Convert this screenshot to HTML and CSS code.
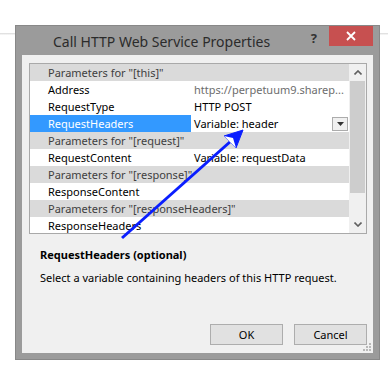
FILE: index.html
```html
<!DOCTYPE html>
<html lang="en">
<head>
    <meta charset="UTF-8">
    <title>Call HTTP Web Service Properties</title>
    <link rel="stylesheet" href="styles.css">
</head>
<body>
    <div class="dialog">
        <div class="titlebar">
            <span class="title">Call HTTP Web Service Properties</span>
            <span class="help">?</span>
            <span class="close"><svg width="10" height="10" viewBox="0 0 10 10"><path d="M1 1L9 9M9 1L1 9" stroke="#ffffff" stroke-width="1.8"/></svg></span>
        </div>
        <div class="client">
            <div class="grid">
                <div class="rows">
                    <div class="row category">Parameters for "[this]"</div>
                    <div class="row"><span class="name">Address</span><span class="value muted">https://perpetuum9.sharep...</span></div>
                    <div class="row"><span class="name">RequestType</span><span class="value">HTTP POST</span></div>
                    <div class="row selected"><span class="name">RequestHeaders</span><span class="value">Variable: header<span class="drop"><svg width="7" height="4" viewBox="0 0 7 4"><path d="M0 0H7L3.5 4Z" fill="#333"/></svg></span></span></div>
                    <div class="row category">Parameters for "[request]"</div>
                    <div class="row"><span class="name">RequestContent</span><span class="value">Variable: requestData</span></div>
                    <div class="row category">Parameters for "[response]"</div>
                    <div class="row"><span class="name">ResponseContent</span><span class="value"></span></div>
                    <div class="row category">Parameters for "[responseHeaders]"</div>
                    <div class="row"><span class="name">ResponseHeaders</span><span class="value"></span></div>
                </div>
                <div class="scrollbar">
                    <div class="arrow"><svg width="8" height="5" viewBox="0 0 8 5"><path d="M0.5 4.5L4 1L7.5 4.5" fill="none" stroke="#606060" stroke-width="1.6"/></svg></div>
                    <div class="thumb"></div>
                    <div class="track"></div>
                    <div class="arrow"><svg width="8" height="5" viewBox="0 0 8 5"><path d="M0.5 0.5L4 4L7.5 0.5" fill="none" stroke="#606060" stroke-width="1.6"/></svg></div>
                </div>
            </div>
            <div class="info">
                <p class="info-title">RequestHeaders (optional)</p>
                <p class="info-text">Select a variable containing headers of this HTTP request.</p>
            </div>
            <div class="buttons">
                <button class="btn">OK</button>
                <button class="btn">Cancel</button>
            </div>
            <svg class="grip" width="10" height="10" viewBox="0 0 10 10">
                <rect x="7" y="1" width="2" height="2" fill="#b8b8b8"/>
                <rect x="4" y="4" width="2" height="2" fill="#b8b8b8"/>
                <rect x="7" y="4" width="2" height="2" fill="#b8b8b8"/>
                <rect x="1" y="7" width="2" height="2" fill="#b8b8b8"/>
                <rect x="4" y="7" width="2" height="2" fill="#b8b8b8"/>
                <rect x="7" y="7" width="2" height="2" fill="#b8b8b8"/>
            </svg>
        </div>
    </div>
    <svg class="pointer" width="388" height="368" viewBox="0 0 388 368">
        <line x1="122" y1="238" x2="240" y2="133" stroke="#0a1eff" stroke-width="3"/>
        <path d="M224 136L243 130L236 148Z" fill="#0a1eff" stroke="#0a1eff" stroke-width="1" stroke-linejoin="miter"/>
        <path d="M224 136L236 148L233 138Z" fill="#ffffff"/>
    </svg>
</body>
</html>
```

FILE: styles.css
```css
* {
    margin: 0;
    padding: 0;
    box-sizing: border-box;
}

body {
    width: 388px;
    height: 368px;
    padding: 25px 0 0 15px;
    background: linear-gradient(#ffffff 33px, #dcdcdc 33px, #e6e6e6 34px, #ffffff 35px);
    font-family: "Noto Sans", sans-serif;
    font-size: 11px;
    position: relative;
    overflow: hidden;
}

.dialog {
    width: 365px;
    height: 335px;
    background-color: #9b9b9b;
    border: solid 1px #888888;
    display: flex;
    flex-direction: column;
    padding: 0 6px 6px 6px;
}

.titlebar {
    height: 29px;
    display: flex;
    align-items: flex-start;
}

.title {
    font-size: 14px;
    color: #2b2b2b;
    margin: 6px 0 0 31px;
}

.help {
    font-weight: bold;
    font-size: 13px;
    color: #333333;
    margin: 3px 12px 0 auto;
}

.close {
    width: 44px;
    height: 20px;
    background-color: #c75050;
    display: flex;
    justify-content: center;
    align-items: center;
}

.client {
    flex: 1;
    background-color: #f0f0f0;
    padding: 8px 6px 0 7px;
    display: flex;
    flex-direction: column;
    position: relative;
}

.grid {
    height: 171px;
    border: solid 1px #a9a9a9;
    background-color: #ffffff;
    display: flex;
}

.rows {
    width: 319px;
    display: flex;
    flex-direction: column;
}

.row {
    height: 17px;
    display: flex;
    align-items: center;
    color: #000000;
    line-height: 17px;
}

.row.category {
    background-color: #dadada;
    color: #404040;
    padding-left: 18px;
}

.name {
    width: 161px;
    height: 17px;
    padding-left: 18px;
}

.value {
    flex: 1;
    height: 17px;
    padding-left: 3px;
    display: flex;
    align-items: center;
}

.muted {
    color: #6d6d6d;
}

.selected .name {
    background-color: #3399ff;
    color: #ffffff;
}

.drop {
    width: 16px;
    height: 14px;
    margin-left: auto;
    margin-right: 1px;
    border: solid 1px #acacac;
    background-color: #f0f0f0;
    display: flex;
    justify-content: center;
    align-items: center;
}

.scrollbar {
    width: 17px;
    background-color: #f0f0f0;
    display: flex;
    flex-direction: column;
    padding: 0 1px;
}

.arrow {
    height: 17px;
    display: flex;
    justify-content: center;
    align-items: center;
}

.thumb {
    height: 112px;
    background-color: #cdcdcd;
}

.track {
    flex: 1;
}

.info {
    padding: 13px 0 0 11px;
}

.info-title {
    font-weight: bold;
    color: #000000;
    line-height: 16px;
}

.info-text {
    margin-top: 7px;
    color: #000000;
    line-height: 16px;
}

.buttons {
    margin-top: 38px;
    display: flex;
    justify-content: flex-end;
    gap: 11px;
}

.btn {
    width: 73px;
    height: 21px;
    border: solid 1px #adadad;
    background-color: #e1e1e1;
    font-family: "Noto Sans", sans-serif;
    font-size: 11px;
    color: #000000;
}

.grip {
    position: absolute;
    right: 1px;
    bottom: 1px;
}

.pointer {
    position: absolute;
    left: 0;
    top: 0;
}
```
